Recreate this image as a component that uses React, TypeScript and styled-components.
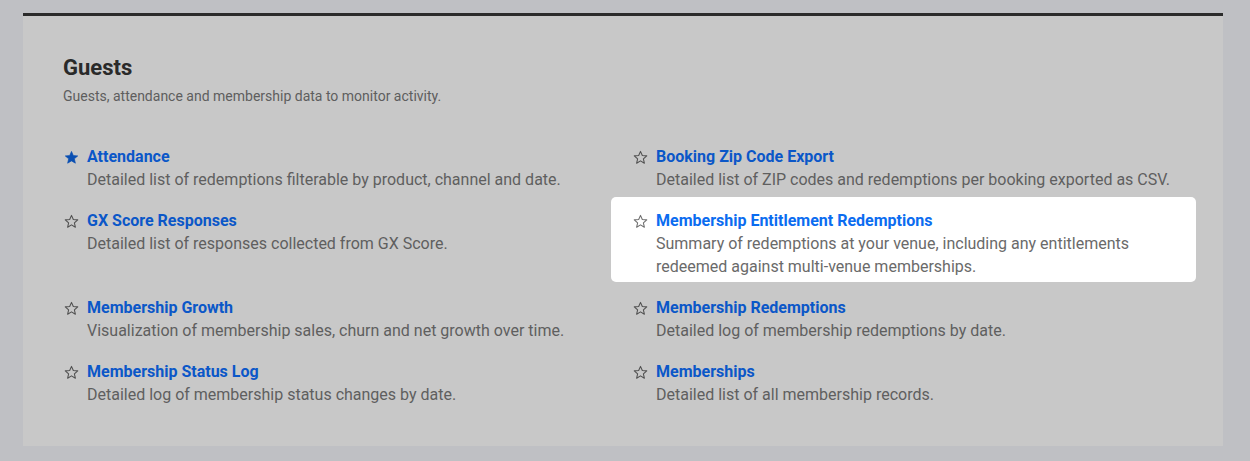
import React from "react";
import styled, { createGlobalStyle } from "styled-components";

const Global = createGlobalStyle`
  html, body { margin: 0; padding: 0; background: #bfc0c4; }
  body { font-family: Roboto, "Liberation Sans", Arial, sans-serif; }
`;

const Page = styled.div`
  padding: 13px 27px 15px 23px;
`;

const Panel = styled.section`
  background: #c8c8c8;
  border-top: 3px solid #2b2b2b;
  padding: 39px 27px 31px 19px;
  box-sizing: border-box;
  height: 433px;
`;

const Heading = styled.h2`
  margin: 0 0 6px 21px;
  font-size: 22px;
  line-height: 26px;
  font-weight: 700;
  color: #2a2a2a;
`;

const Subtitle = styled.p`
  margin: 0 0 28px 21px;
  font-size: 14px;
  line-height: 18px;
  color: #5e5e5e;
`;

const Grid = styled.div`
  display: grid;
  grid-template-columns: 569px 1fr;
  row-gap: 2px;
`;

const Item = styled.div<{ $active?: boolean }>`
  display: grid;
  grid-template-columns: 16px 1fr;
  align-content: start;
  column-gap: 7px;
  padding: 13px 8px 4px 22px;
  border-radius: 5px;
  background: ${(p) => (p.$active ? "#ffffff" : "transparent")};
`;

const StarBox = styled.span`
  display: flex;
  align-items: center;
  height: 22px;
`;

const Title = styled.a<{ $active?: boolean }>`
  font-size: 16px;
  line-height: 22px;
  font-weight: 700;
  color: ${(p) => (p.$active ? "#0b6cf0" : "#0b57c8")};
  text-decoration: none;
`;

const Desc = styled.p<{ $active?: boolean }>`
  grid-column: 2;
  margin: 0;
  font-size: 16px;
  line-height: 23px;
  color: ${(p) => (p.$active ? "#6a6a6a" : "#5f5f5f")};
`;

const Star = ({ filled, active }: { filled?: boolean; active?: boolean }) => (
  <svg width="15" height="15" viewBox="0 0 24 24">
    <path
      d="M12 2.2l2.9 6.6 7.1.6-5.4 4.7 1.6 7-6.2-3.7-6.2 3.7 1.6-7L2 9.4l7.1-.6z"
      fill={filled ? "#0a4fb2" : "none"}
      stroke={filled ? "#0a4fb2" : active ? "#6e6e6e" : "#505050"}
      strokeWidth={filled ? 1 : 1.7}
      strokeLinejoin="round"
    />
  </svg>
);

type Report = { title: string; desc: string; fav?: boolean; active?: boolean };

const reports: Report[] = [
  { title: "Attendance", desc: "Detailed list of redemptions filterable by product, channel and date.", fav: true },
  { title: "Booking Zip Code Export", desc: "Detailed list of ZIP codes and redemptions per booking exported as CSV." },
  { title: "GX Score Responses", desc: "Detailed list of responses collected from GX Score." },
  {
    title: "Membership Entitlement Redemptions",
    desc: "Summary of redemptions at your venue, including any entitlements redeemed against multi-venue memberships.",
    active: true,
  },
  { title: "Membership Growth", desc: "Visualization of membership sales, churn and net growth over time." },
  { title: "Membership Redemptions", desc: "Detailed log of membership redemptions by date." },
  { title: "Membership Status Log", desc: "Detailed log of membership status changes by date." },
  { title: "Memberships", desc: "Detailed list of all membership records." },
];

export default function App() {
  return (
    <>
      <Global />
      <Page>
        <Panel>
          <Heading>Guests</Heading>
          <Subtitle>Guests, attendance and membership data to monitor activity.</Subtitle>
          <Grid>
            {reports.map((r) => (
              <Item key={r.title} $active={r.active}>
                <StarBox>
                  <Star filled={r.fav} active={r.active} />
                </StarBox>
                <Title href="#" $active={r.active}>
                  {r.title}
                </Title>
                <Desc $active={r.active}>{r.desc}</Desc>
              </Item>
            ))}
          </Grid>
        </Panel>
      </Page>
    </>
  );
}
